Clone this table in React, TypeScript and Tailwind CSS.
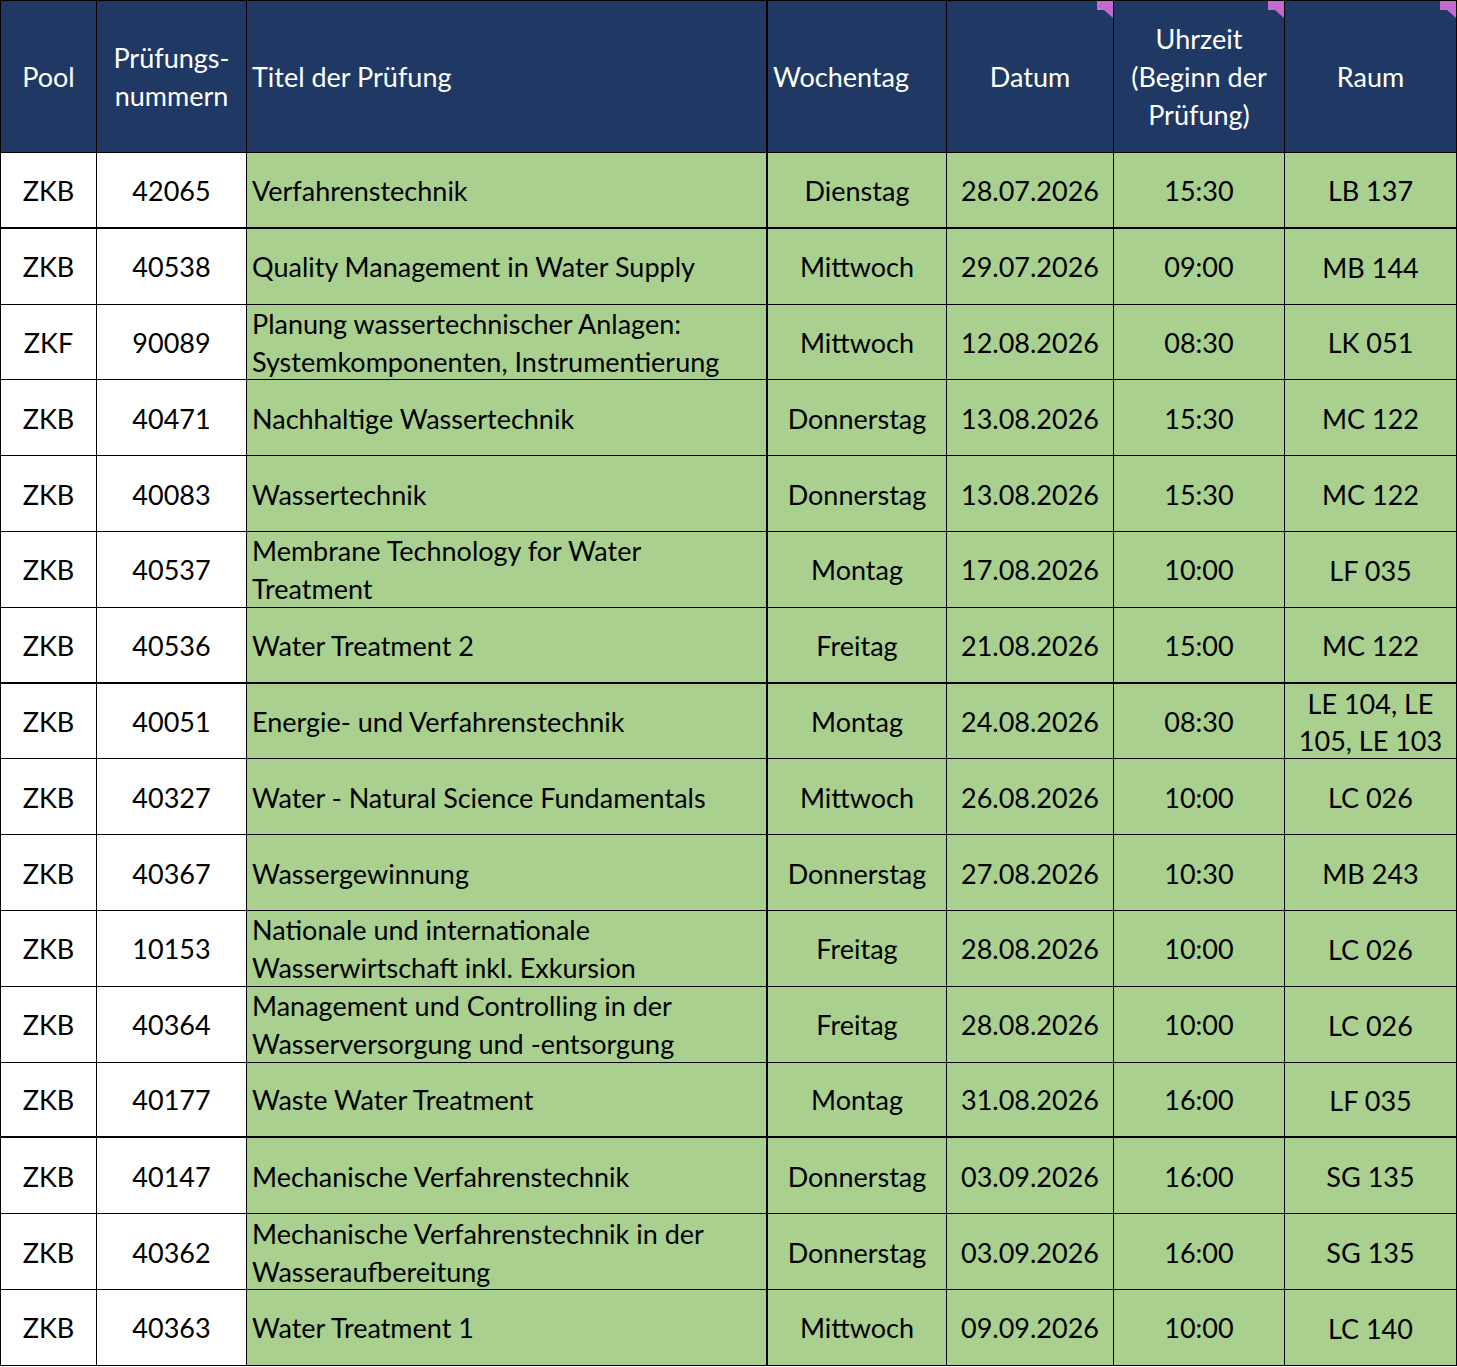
import React from "react";

type Row = {
  pool: string;
  nr: string;
  title: string[];
  day: string;
  date: string;
  time: string;
  room: string[];
  thick?: boolean;
};

const rows: Row[] = [
  { pool: "ZKB", nr: "42065", title: ["Verfahrenstechnik"], day: "Dienstag", date: "28.07.2026", time: "15:30", room: ["LB 137"], thick: true },
  { pool: "ZKB", nr: "40538", title: ["Quality Management in Water Supply"], day: "Mittwoch", date: "29.07.2026", time: "09:00", room: ["MB 144"] },
  { pool: "ZKF", nr: "90089", title: ["Planung wassertechnischer Anlagen:", "Systemkomponenten, Instrumentierung"], day: "Mittwoch", date: "12.08.2026", time: "08:30", room: ["LK 051"] },
  { pool: "ZKB", nr: "40471", title: ["Nachhaltige Wassertechnik"], day: "Donnerstag", date: "13.08.2026", time: "15:30", room: ["MC 122"] },
  { pool: "ZKB", nr: "40083", title: ["Wassertechnik"], day: "Donnerstag", date: "13.08.2026", time: "15:30", room: ["MC 122"] },
  { pool: "ZKB", nr: "40537", title: ["Membrane Technology for Water", "Treatment"], day: "Montag", date: "17.08.2026", time: "10:00", room: ["LF 035"] },
  { pool: "ZKB", nr: "40536", title: ["Water Treatment 2"], day: "Freitag", date: "21.08.2026", time: "15:00", room: ["MC 122"], thick: true },
  { pool: "ZKB", nr: "40051", title: ["Energie- und Verfahrenstechnik"], day: "Montag", date: "24.08.2026", time: "08:30", room: ["LE 104, LE", "105, LE 103"] },
  { pool: "ZKB", nr: "40327", title: ["Water - Natural Science Fundamentals"], day: "Mittwoch", date: "26.08.2026", time: "10:00", room: ["LC 026"] },
  { pool: "ZKB", nr: "40367", title: ["Wassergewinnung"], day: "Donnerstag", date: "27.08.2026", time: "10:30", room: ["MB 243"] },
  { pool: "ZKB", nr: "10153", title: ["Nationale und internationale", "Wasserwirtschaft inkl. Exkursion"], day: "Freitag", date: "28.08.2026", time: "10:00", room: ["LC 026"] },
  { pool: "ZKB", nr: "40364", title: ["Management und Controlling in der", "Wasserversorgung und -entsorgung"], day: "Freitag", date: "28.08.2026", time: "10:00", room: ["LC 026"] },
  { pool: "ZKB", nr: "40177", title: ["Waste Water Treatment"], day: "Montag", date: "31.08.2026", time: "16:00", room: ["LF 035"], thick: true },
  { pool: "ZKB", nr: "40147", title: ["Mechanische Verfahrenstechnik"], day: "Donnerstag", date: "03.09.2026", time: "16:00", room: ["SG 135"] },
  { pool: "ZKB", nr: "40362", title: ["Mechanische Verfahrenstechnik in der", "Wasseraufbereitung"], day: "Donnerstag", date: "03.09.2026", time: "16:00", room: ["SG 135"] },
  { pool: "ZKB", nr: "40363", title: ["Water Treatment 1"], day: "Mittwoch", date: "09.09.2026", time: "10:00", room: ["LC 140"] },
];

function Lines({ lines }: { lines: string[] }) {
  return (
    <div>
      {lines.map((l, i) => (
        <div key={i}>{l}</div>
      ))}
    </div>
  );
}

// excel comment marker
function Marker() {
  return (
    <svg className="absolute top-0 right-0" width="16" height="17" viewBox="0 0 16 17">
      <polygon points="0,0 16,0 16,17 7,9 0,9" fill="#c46bd0" />
    </svg>
  );
}

export default function App() {
  const th = "relative flex items-center border-t border-r border-b border-black bg-[#203864] text-white";
  return (
    <div className="bg-white w-[1457px] h-[1367px]" style={{ fontFamily: "Lato, 'Open Sans', sans-serif" }}>
      <div className="grid grid-cols-[97px_150px_521px_179px_167px_171px_172px] grid-rows-[153px_repeat(16,75.8px)] w-[1457px] text-[27px] leading-[38px] text-black whitespace-nowrap">
        <div className={`${th} border-l justify-center`}>Pool</div>
        <div className={`${th} justify-center text-center`}>
          <Lines lines={["Prüfungs-", "nummern"]} />
        </div>
        <div className={`${th} pl-[5px] border-r-2`}>Titel der Prüfung</div>
        <div className={`${th} pl-[5px]`}>Wochentag</div>
        <div className={`${th} justify-center`}>
          Datum
          <Marker />
        </div>
        <div className={`${th} justify-center text-center`}>
          <Lines lines={["Uhrzeit", "(Beginn der", "Prüfung)"]} />
          <Marker />
        </div>
        <div className={`${th} justify-center`}>
          Raum
          <Marker />
        </div>

        {rows.map((r, i) => {
          const b = `flex items-center pt-[2px] border-r border-black ${r.thick ? "border-b-2" : "border-b"}`;
          const g = `${b} bg-[#a9d08e] justify-center text-center`;
          return (
            <React.Fragment key={i}>
              <div className={`${b} border-l bg-white justify-center`}>{r.pool}</div>
              <div className={`${b} bg-white justify-center`}>{r.nr}</div>
              <div className={`${b} border-r-2 bg-[#a9d08e] pl-[5px]`}>
                <Lines lines={r.title} />
              </div>
              <div className={g}>{r.day}</div>
              <div className={g}>{r.date}</div>
              <div className={g}>{r.time}</div>
              <div className={`${g} leading-[37px]`}>
                <Lines lines={r.room} />
              </div>
            </React.Fragment>
          );
        })}
      </div>
    </div>
  );
}
